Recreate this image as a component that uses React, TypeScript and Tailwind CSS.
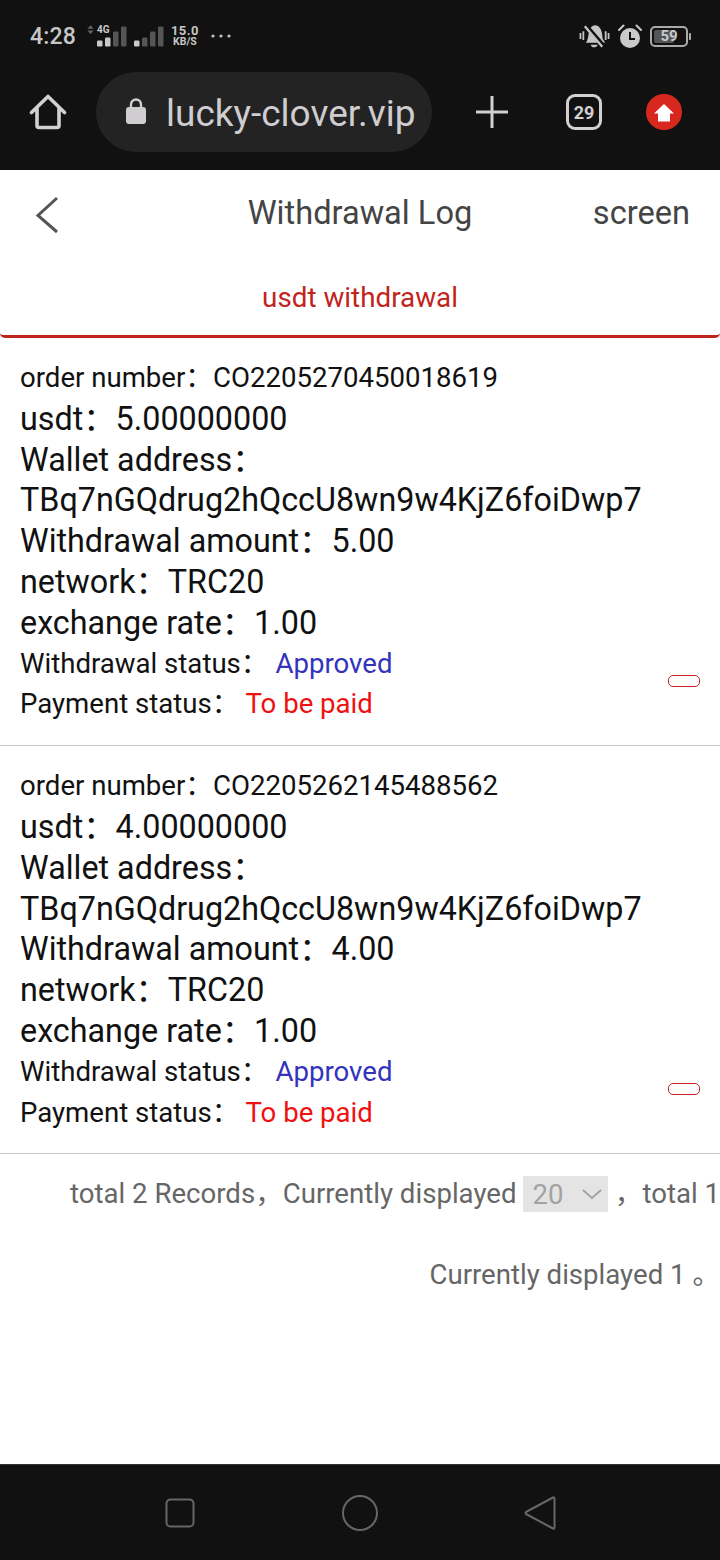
const ORDERS = [
  { no: "CO2205270450018619", usdt: "5.00000000", amount: "5.00" },
  { no: "CO2205262145488562", usdt: "4.00000000", amount: "4.00" },
];

function SignalBars({ levels }: { levels: boolean[] }) {
  return (
    <svg width="30" height="21" viewBox="0 0 30 21">
      {levels.map((on, i) => {
        const h = [6, 9, 15, 20][i];
        return (
          <rect key={i} x={i * 8} y={20.5 - h} width="5.500" height={h} rx="1.2" fill={on ? "#c9c9c9" : "#555"} />
        );
      })}
    </svg>
  );
}

function StatusBar() {
  return (
    <div className="h-[70px] flex items-center justify-between pl-[30px] pr-[30px] pt-[2px]">
      <div className="flex items-center">
        <span className="text-[23px] font-medium text-[#c6c6c6] w-[57px] tracking-[0.2px] mt-[3px]">4:28</span>
        <svg width="7" height="9" viewBox="0 0 8 10" className="-mt-[13px] mr-[3px]">
          <path d="M4 0 7.500 4H.5zM4 10 .5 6h7z" fill="#666" />
        </svg>
        <div className="relative">
          <span className="absolute -top-[1px] left-[0px] text-[10px] leading-[10px] font-bold text-[#c9c9c9]">4G</span>
          <SignalBars levels={[true, true, false, false]} />
        </div>
        <div className="ml-[7px]">
          <SignalBars levels={[true, false, false, false]} />
        </div>
        <div className="ml-[7px] flex flex-col items-center text-[#c6c6c6] font-bold">
          <span className="text-[13px] leading-[11px] tracking-[0.4px]">15.0</span>
          <span className="text-[10.5px] leading-[11px]">KB/S</span>
        </div>
        <svg width="20" height="4" viewBox="0 0 20 4" className="ml-[12px] -mt-[1px]">
          <circle cx="2" cy="2" r="1.6" fill="#c6c6c6" />
          <circle cx="10" cy="2" r="1.6" fill="#c6c6c6" />
          <circle cx="18" cy="2" r="1.6" fill="#c6c6c6" />
        </svg>
      </div>
      <div className="flex items-center">
        <svg width="31" height="26" viewBox="0 0 32 26">
          <path d="M7 20c2-2 2.500-6 3-10 .5-4 3-8 6.500-8s6 3 7 7l1 7 2.500 4z" fill="#c6c6c6" />
          <path d="M12 22c1 3.500 6 3.500 7.500 0z" fill="#c6c6c6" />
          <path d="M7 2l18 21" stroke="#111" strokeWidth="4.500" />
          <path d="M6 3l18 21" stroke="#c6c6c6" strokeWidth="2.400" />
          <path d="M1.500 10v6M4.500 8v9M27.500 8v9M30.500 10v6" stroke="#c6c6c6" strokeWidth="1.800" />
        </svg>
        <svg width="24" height="25" viewBox="0 0 24 25" className="ml-[8px]">
          <circle cx="12" cy="14" r="10" fill="#c9c9c9" />
          <path d="M12 8v7h5" stroke="#111" strokeWidth="2" fill="none" />
          <path d="M1 6 5.500 1.500M23 6 18.500 1.500" stroke="#c9c9c9" strokeWidth="2" strokeLinecap="round" />
        </svg>
        <div className="ml-[8px] relative w-[38px] h-[21px] border-2 border-[#aaa] rounded-[5px] flex items-center justify-center">
          <div className="absolute left-[2px] top-[2px] bottom-[2px] w-[20px] bg-[#555] rounded-[2px]" />
          <span className="relative text-[15px] font-bold text-[#c9c9c9]">59</span>
          <div className="absolute -right-[5px] top-[5px] w-[2px] h-[7px] bg-[#aaa] rounded-r-[1px]" />
        </div>
        <div className="w-[2px]" />
      </div>
    </div>
  );
}

function BrowserBar() {
  return (
    <div className="h-[100px] flex items-start relative pt-[2px]">
      <svg width="38" height="38" viewBox="0 0 38 38" className="ml-[29px] mt-[21px]">
        <path
          d="M2.500 19.500 19 3.500l16.500 16M8 15v17.500a2 2 0 0 0 2 2h18a2 2 0 0 0 2-2V15"
          fill="none"
          stroke="#d2d0d2"
          strokeWidth="3.600"
          strokeLinecap="round"
          strokeLinejoin="round"
        />
      </svg>
      <div className="ml-[29px] w-[336px] h-[80px] rounded-[40px] bg-[#232323] flex items-center pl-[30px]">
        <svg width="20" height="26" viewBox="0 0 20 26" className="-mt-[2px]">
          <path d="M5 11V6.500a5 5 0 0 1 10 0V11" fill="none" stroke="#cfcdcf" strokeWidth="2.400" />
          <rect x="0" y="9" width="20" height="17" rx="3" fill="#cfcdcf" />
        </svg>
        <span className="ml-[20px] mt-[3px] text-[37px] text-[#cfcdcf] whitespace-nowrap">lucky-clover.vip</span>
      </div>
      <svg width="32" height="32" viewBox="0 0 32 32" className="ml-[44px] mt-[24px]">
        <path d="M16 0v32M0 16h32" stroke="#d2d0d2" strokeWidth="3" />
      </svg>
      <div className="ml-[58px] mt-[22px] w-[36px] h-[36px] border-[3.500px] border-[#d2d0d2] rounded-[9px] flex items-center justify-center text-[18px] font-bold text-[#d2d0d2]">
        29
      </div>
      <svg width="36" height="36" viewBox="0 0 36 36" className="ml-[44px] mt-[22px]">
        <circle cx="18" cy="18" r="18" fill="#d8271f" />
        <path d="M18 10 28 19.500h-4v8H12v-8H8z" fill="#fff" />
      </svg>
    </div>
  );
}

function Row({ label, value, color }: { label: string; value: string; color?: string }) {
  return (
    <div className="h-[40.8px] leading-[40.8px] whitespace-nowrap text-[32.3px]">
      {label}：<span style={{ color }}>{value}</span>
    </div>
  );
}

function SmallRow({ label, value, color, gap }: { label: string; value: string; color?: string; gap?: string }) {
  return (
    <div className="h-[40.8px] leading-[40.8px] whitespace-nowrap text-[27.6px]">
      {label}：<span className={gap} style={{ color }}>{value}</span>
    </div>
  );
}

function OrderItem({ no, usdt, amount }: { no: string; usdt: string; amount: string }) {
  return (
    <div className="relative px-[20px] py-[20px] border-b border-[#ccc] text-[#111]">
      <SmallRow label="order number" value={no} />
      <Row label="usdt" value={usdt} />
      <div className="h-[40.8px] leading-[40.8px] text-[32.3px]">Wallet address：</div>
      <div className="h-[40.8px] leading-[40.8px] text-[32.3px] whitespace-nowrap">TBq7nGQdrug2hQccU8wn9w4KjZ6foiDwp7</div>
      <Row label="Withdrawal amount" value={amount} />
      <Row label="network" value="TRC20" />
      <Row label="exchange rate" value="1.00" />
      <SmallRow label="Withdrawal status" value="Approved" color="#3333bb" gap="ml-[7px]" />
      <SmallRow label="Payment status" value="To be paid" color="#ee1111" gap="ml-[6px]" />
      <div className="absolute right-[20px] bottom-[58px] w-[32px] h-[12px] border-[1.500px] border-[#c62222] rounded-[5px]" />
    </div>
  );
}

export default function App() {
  return (
    <div className="w-[720px] h-[1560px] flex flex-col bg-white overflow-hidden font-['Roboto','Noto_Sans_CJK_SC',sans-serif]">
      <div className="bg-[#111] h-[170px]">
        <StatusBar />
        <BrowserBar />
      </div>

      <div className="h-[88px] flex items-center justify-between relative">
        <svg width="26" height="38" viewBox="0 0 26 38" className="ml-[34px] mt-[2px]">
          <path d="M23 2 4 19.500 23 36" fill="none" stroke="#555" strokeWidth="3" />
        </svg>
        <div className="absolute inset-x-0 text-center text-[32.6px] text-[#444] -mt-[2px]">Withdrawal Log</div>
        <div className="mr-[30px] text-[32.6px] text-[#444] -mt-[2px]">screen</div>
      </div>

      <div className="h-[80px] flex items-center justify-center text-[27.8px] text-[#c1241c] border-b-[3px] border-[#c1241c] rounded-b-[5px]">
        <span className="mt-[2px]">usdt withdrawal</span>
      </div>

      {ORDERS.map((o) => (
        <OrderItem key={o.no} no={o.no} usdt={o.usdt} amount={o.amount} />
      ))}

      <div className="text-[27.6px] text-[#666] mt-[19px] flex-1">
        <div className="h-[40px] flex items-center pl-[70px] whitespace-nowrap">
          total 2 Records，Currently displayed
          <div className="ml-[7px] mt-[2px] w-[85px] h-[36px] bg-[#e4e4e4] flex items-center justify-between pl-[9px] pr-[5px] text-[#a2a2a2]">
            <span>20</span>
            <svg width="22" height="12" viewBox="0 0 22 12">
              <path d="M2 2l9 8 9-8" fill="none" stroke="#a2a2a2" strokeWidth="1.800" />
            </svg>
          </div>
          <span className="ml-[7px]">，total 1</span>
        </div>
        <div className="mt-[42px] h-[40px] leading-[40px] text-right whitespace-nowrap">Currently displayed 1 。</div>
      </div>

      <div className="bg-[#111] h-[96px] border-t border-[#333] flex items-center">
        <svg width="30" height="30" viewBox="0 0 30 30" className="ml-[165px]">
          <rect x="1.500" y="1.500" width="27" height="27" rx="4" fill="none" stroke="#666" strokeWidth="2" />
        </svg>
        <svg width="36" height="36" viewBox="0 0 36 36" className="ml-[147px]">
          <circle cx="18" cy="18" r="17" fill="none" stroke="#666" strokeWidth="2" />
        </svg>
        <svg width="32" height="36" viewBox="0 0 32 36" className="ml-[146px]">
          <path d="M29 2.500 2 17a1.500 1.500 0 0 0 0 2l27 14.500c.8.4 1.500-.2 1.500-1V3.500c0-.8-.7-1.400-1.500-1z" fill="none" stroke="#666" strokeWidth="2" strokeLinejoin="round" />
        </svg>
      </div>
    </div>
  );
}
